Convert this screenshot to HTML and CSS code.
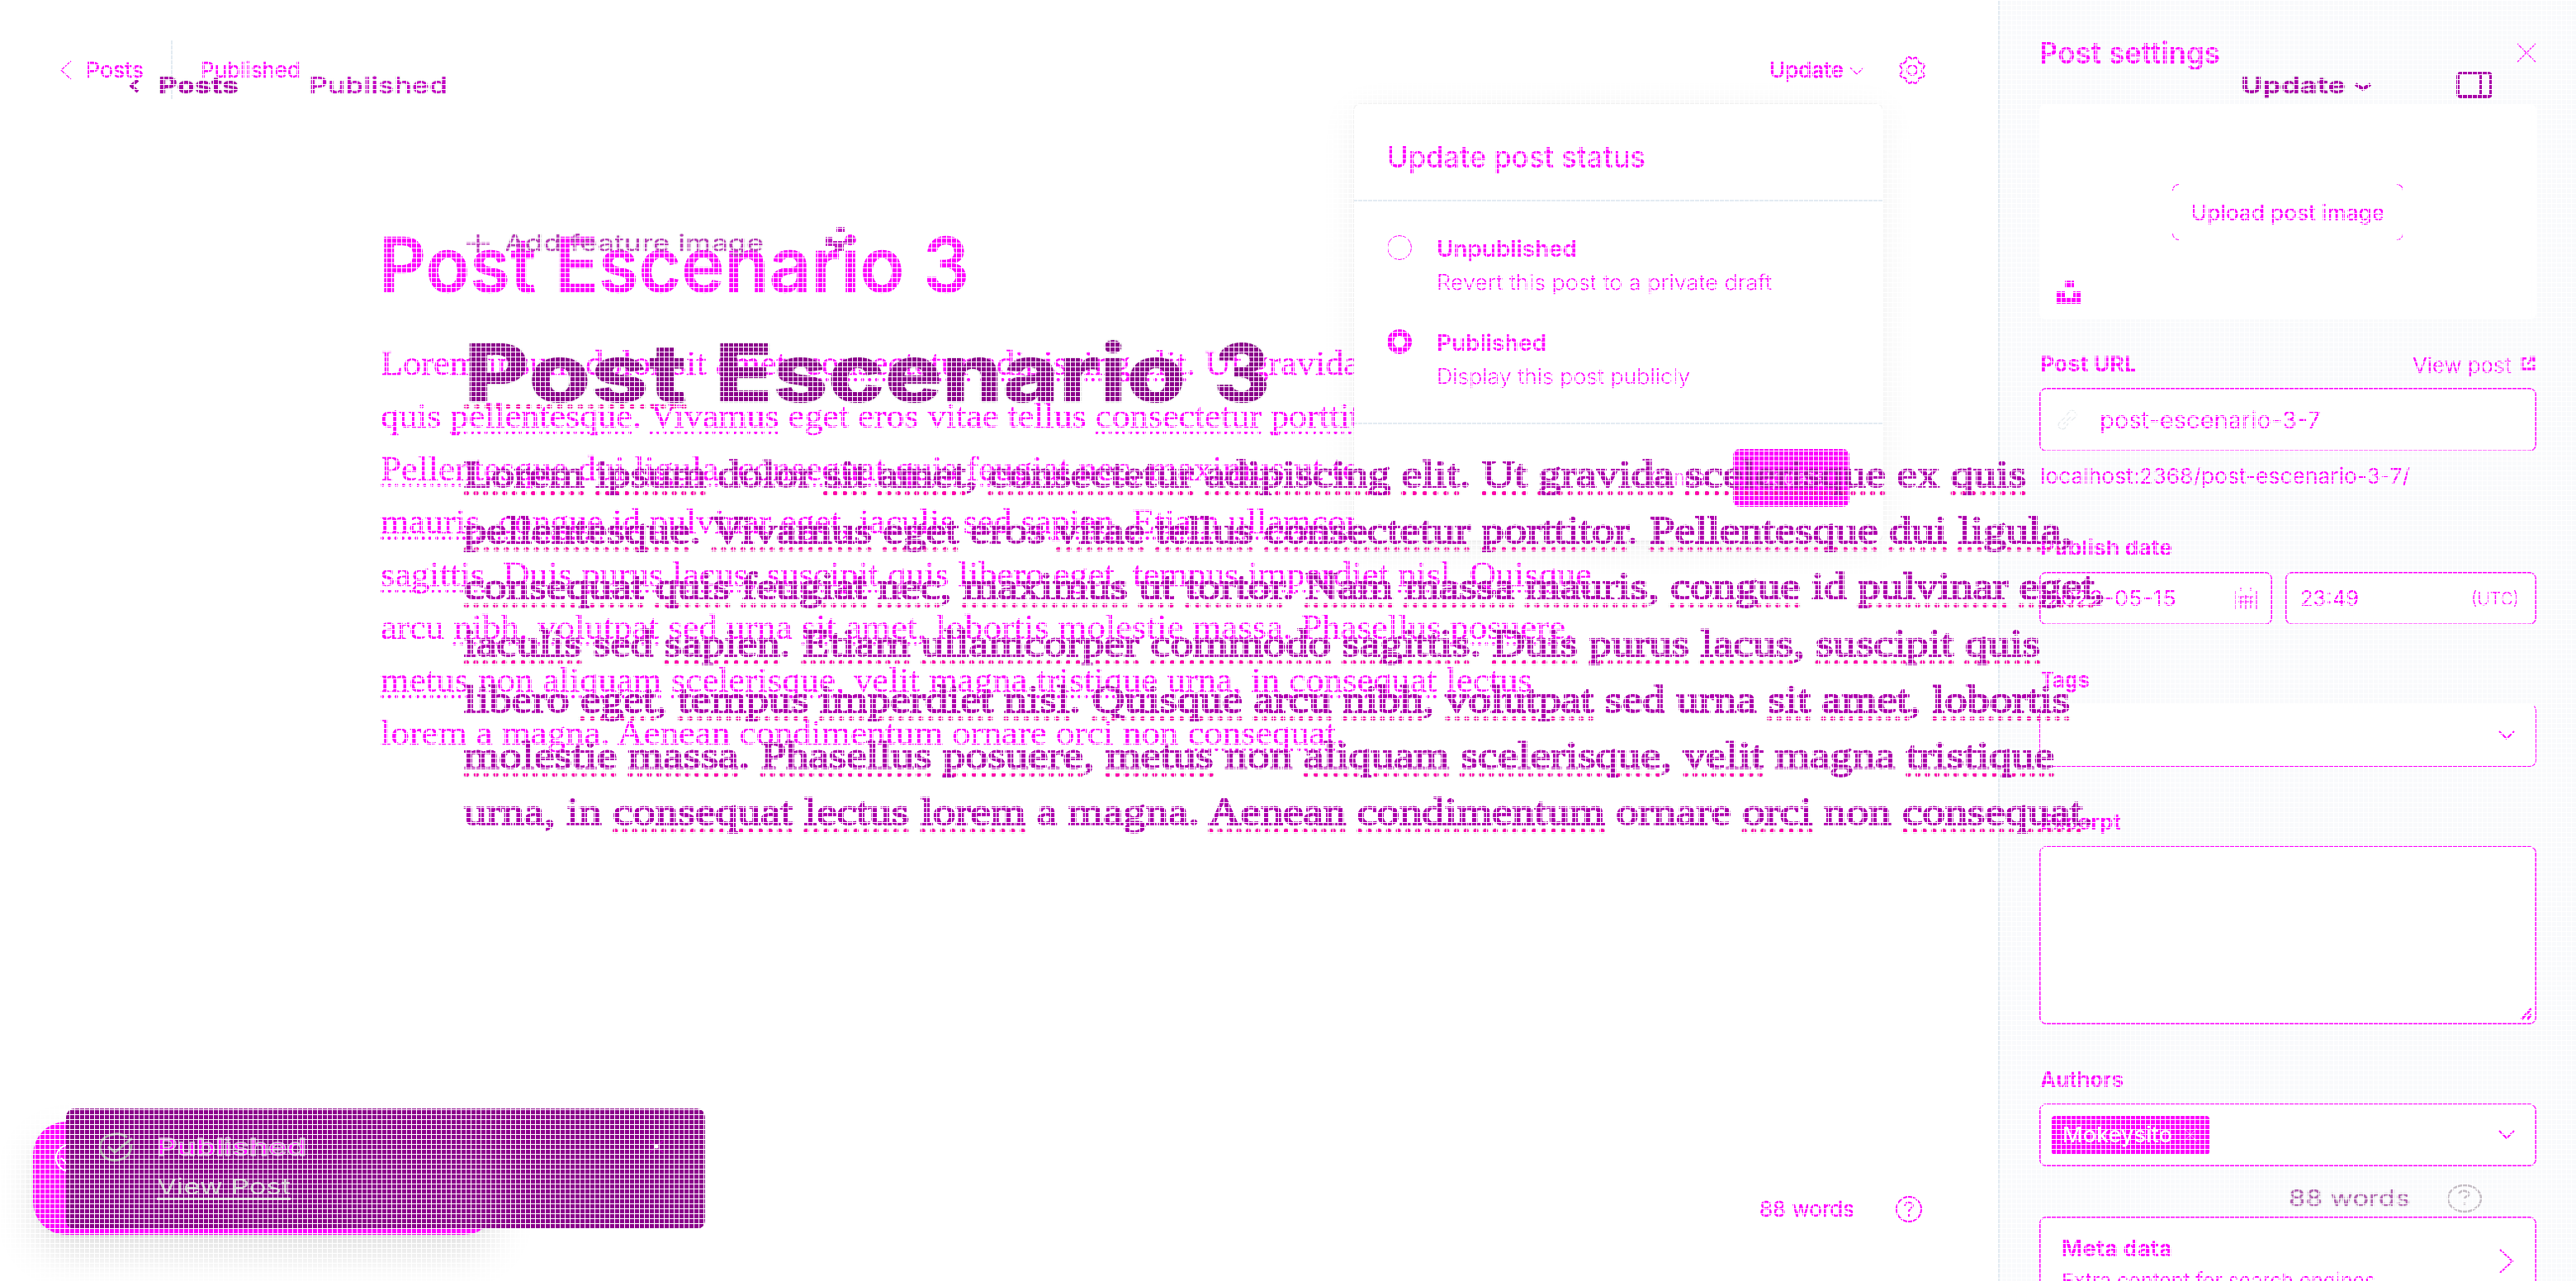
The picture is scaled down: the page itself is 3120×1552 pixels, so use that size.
FILE: index.html
```html
<!DOCTYPE html>
<html lang="en">
<head>
<meta charset="utf-8">
<title>Post Escenario 3</title>
<link rel="stylesheet" href="styles.css">
</head>
<body>
<div class="screen">
  <div class="app">
    <main class="editor">
      <header class="bar">
        <svg class="ico thin back" width="16" height="24" viewBox="0 0 16 24"><path d="M14 1L2 12l12 11"/></svg>
        <span class="fit posts" data-w="70">Posts</span>
        <i class="divider"></i>
        <span class="fit" data-w="121">Published</span>
        <span class="fit update" data-w="90">Update</span>
        <svg class="ico thin caret" width="18" height="12" viewBox="0 0 18 12"><path d="M1 2l8 8 8-8"/></svg>
        <svg class="ico gear" width="34" height="34" viewBox="0 0 34 34"><path d="M17 4Q22-1 24 5q0 4 5 4 5 2 1 6-3 3 0 5 4 5-2 6-4 0-4 4-2 5-7 1-4 4-7-1 0-4-4-4-6-2-2-6 3-3 0-6-4-4 1-5 5-1 5-5 2-6 7 0z"/><circle cx="17" cy="17" r="6"/></svg>
      </header>
      <h1><span class="fit" data-w="715">Post Escenario 3</span></h1>
      <div class="body">
        <p><span class="fit" data-w="1186">Lorem ipsum dolor sit amet, <u>consectetur</u> <u>adipiscing</u> <u>elit</u>. Ut gravida</span></p>
        <p><span class="fit" data-w="1231">quis <u>pellentesque</u>. <u>Vivamus</u> eget eros vitae tellus <u>consectetur</u> <u>porttitor</u>.</span></p>
        <p><span class="fit" data-w="1261"><u>Pellentesque</u> dui <u>ligula</u>, <u>consequat</u> <u>quis</u> <u>feugiat</u> nec, maximus ut tortor.</span></p>
        <p><span class="fit" data-w="1240"><u>mauris</u>, <u>congue</u> id pulvinar eget, iaculis sed <u>sapien</u>. <u>Etiam</u> <u>ullamcorper</u></span></p>
        <p><span class="fit" data-w="1467"><u>sagittis</u>. Duis <u>purus</u> <u>lacus</u>, <u>suscipit</u> quis libero eget, tempus <u>imperdiet</u> <u>nisl</u>. <u>Quisque</u></span></p>
        <p><span class="fit" data-w="1446">arcu <u>nibh</u>, <u>volutpat</u> sed urna <u>sit</u> <u>amet</u>, lobortis molestie massa. Phasellus <u>posuere</u>,</span></p>
        <p><span class="fit" data-w="1395"><u>metus</u> non <u>aliquam</u> <u>scelerisque</u>, velit magna <u>tristique</u> urna, in <u>consequat</u> <u>lectus</u></span></p>
        <p><span class="fit" data-w="1168">lorem a magna. Aenean condimentum ornare orci non <u>consequat</u>.</span></p>
      </div>
      <footer class="words"><span class="fit" data-w="115">88 words</span>
        <svg class="ico" width="34" height="34" viewBox="0 0 34 34"><circle cx="17" cy="17" r="15"/><path d="M12 13q1-5 6-4 6 2 3 6-4 2-4 5M17 23v3"/></svg>
      </footer>
    </main>

    <aside class="sidebar">
      <div class="row side-head"><span class="fit" data-w="219">Post settings</span>
        <svg class="ico thin" width="24" height="24" viewBox="0 0 24 24"><path d="M1 1l22 22M23 1L1 23"/></svg></div>
      <div class="upload">
        <div class="upload-btn"><i></i><i></i><i></i><i></i><span class="fit" data-w="234">Upload post image</span></div>
        <svg class="solid unsplash" width="30" height="28" viewBox="0 0 30 28"><path d="M10 0h11v8H10zM0 13h10v7h10v-7h10v15H0z"/></svg>
      </div>
      <div class="row label url"><span class="fit" data-w="117">Post URL</span><span class="view"><span class="fit" data-w="120">View post</span>
        <svg class="ico bold" width="18" height="18" viewBox="0 0 18 18"><path d="M7 3H2v13h14v-5M8 10l8-8M11 2h5v5"/></svg></span></div>
      <div class="field slug">
        <svg class="link" width="26" height="26" viewBox="0 0 26 26"><path d="M11 8l5-6q4-2 7 2 2 3-1 6l-6 5M14 17l-4 6q-4 2-7-1-2-4 1-7l6-5M8 18l10-10"/></svg>
        <span class="fit" data-w="268">post-escenario-3-7</span></div>
      <div class="hint"><span class="fit" data-w="448">localhost:2368/post-escenario-3-7/</span></div>
      <div class="label gap"><span class="fit" data-w="160">Publish date</span></div>
      <div class="row dates">
        <div class="field date"><span class="fit" data-w="157">2022-05-15</span>
          <svg class="ico thin" width="28" height="28" viewBox="0 0 28 28"><path d="M1 5v22M27 5v22M8 1v4M20 1v4M5 12h18M5 18h18M8 12v14M14 10v17M20 12v14"/></svg></div>
        <div class="field time"><span class="fit" data-w="71">23:49</span><small class="fit" data-w="58">(UTC)</small></div>
      </div>
      <div class="label gap"><span class="fit" data-w="60">Tags</span></div>
      <div class="field select open"><svg class="ico" width="20" height="12" viewBox="0 0 20 12"><path d="M1 1l9 9 9-9"/></svg></div>
      <div class="label gap"><span class="fit" data-w="98">Excerpt</span></div>
      <div class="field area"><svg class="ico bold" width="16" height="16" viewBox="0 0 16 16"><path d="M2 14L14 1M9 14l5-6"/></svg></div>
      <div class="label gap"><span class="fit" data-w="101">Authors</span></div>
      <div class="field select"><div class="token"><span class="fit" data-w="133">Mokeysito</span>
          <svg width="18" height="18" viewBox="0 0 18 18"><path d="M1 1l16 16M17 1L1 17"/></svg></div>
        <svg class="ico" width="20" height="12" viewBox="0 0 20 12"><path d="M1 1l9 9 9-9"/></svg></div>
      <div class="field meta"><div><b class="fit" data-w="134">Meta data</b><br><span class="fit" data-w="380">Extra content for search engines</span></div>
        <svg class="ico" width="18" height="30" viewBox="0 0 18 30"><path d="M1 1l15 14L1 29"/></svg></div>
    </aside>
  </div>

  <section class="menu">
    <div class="menu-head"><span class="fit" data-w="313">Update post status</span></div>
    <div class="options">
      <div class="option"><i class="radio"></i><div><b class="fit" data-w="170">Unpublished</b><span class="fit" data-w="406">Revert this post to a private draft</span></div></div>
      <div class="option"><i class="radio on"></i><div><b class="fit" data-w="133">Published</b><span class="fit" data-w="307">Display this post publicly</span></div></div>
    </div>
    <div class="menu-foot"><span class="fit" data-w="72">Cancel</span><div class="btn"><span class="fit" data-w="84">Update</span></div></div>
  </section>

  <div class="toast small"><svg width="36" height="36" viewBox="0 0 36 36"><circle cx="18" cy="18" r="16"/><path d="M8 18l7 7 12-13"/></svg></div>

  <div class="overlay">
    <header class="o-bar">
      <svg class="ico heavy" width="15" height="18" viewBox="0 0 15 18"><path d="M12 2L4 9l8 7"/></svg>
      <b class="fit" data-w="97">Posts</b>
      <span class="fit status" data-w="168">Published</span>
      <b class="fit o-update" data-w="127">Update</b>
      <svg class="ico heavy caret" width="24" height="12" viewBox="0 0 24 12"><path d="M3 3l9 6 9-6"/></svg>
      <svg class="ico heavy panel" width="44" height="32" viewBox="0 0 44 32"><rect x="2" y="2" width="40" height="28" rx="3"/><path d="M30 2v28"/></svg>
    </header>
    <div class="feature">
      <svg class="ico" width="28" height="22" viewBox="0 0 28 22"><path d="M14 0v22M0 11h28"/></svg>
      <span class="fit" data-w="314">Add feature image</span>
      <svg class="solid" width="40" height="30" viewBox="0 0 40 30"><path d="M16 0h10v6H16zM3 12h8v5h18v-5h8v9H25v8H14v-6H3z"/></svg>
    </div>
    <h2><span class="fit" data-w="270"><u>Post</u></span><span class="fit" data-w="570">Escenario</span><span class="fit" data-w="68">3</span></h2>
    <div class="o-body">
      <p><span class="fit" data-w="1892"><u>Lorem</u> <u>ipsum</u> dolor <u>sit</u> <u>amet</u>, <u>consectetur</u> <u>adipiscing</u> <u>elit</u>. <u>Ut</u> <u>gravida</u> <u>scelerisque</u> ex <u>quis</u></span></p>
      <p><span class="fit" data-w="1948"><u>pellentesque</u>. <u>Vivamus</u> <u>eget</u> eros <u>vitae</u> <u>tellus</u> <u>consectetur</u> <u>porttitor</u>. <u>Pellentesque</u> <u>dui</u> <u>ligula</u>,</span></p>
      <p><span class="fit" data-w="1988"><u>consequat</u> <u>quis</u> <u>feugiat</u> <u>nec</u>, <u>maximus</u> <u>ut</u> <u>tortor</u>. <u>Nam</u> <u>massa</u> <u>mauris</u>, <u>congue</u> id <u>pulvinar</u> <u>eget</u>,</span></p>
      <p><span class="fit" data-w="1909"><u>iaculis</u> sed <u>sapien</u>. <u>Etiam</u> <u>ullamcorper</u> <u>commodo</u> <u>sagittis</u>. <u>Duis</u> <u>purus</u> <u>lacus</u>, <u>suscipit</u> <u>quis</u></span></p>
      <p><span class="fit" data-w="1945">libero <u>eget</u>, <u>tempus</u> <u>imperdiet</u> <u>nisl</u>. <u>Quisque</u> <u>arcu</u> <u>nibh</u>, <u>volutpat</u> sed urna <u>sit</u> <u>amet</u>, <u>lobortis</u></span></p>
      <p><span class="fit" data-w="1926"><u>molestie</u> <u>massa</u>. <u>Phasellus</u> <u>posuere</u>, <u>metus</u> non <u>aliquam</u> <u>scelerisque</u>, <u>velit</u> magna <u>tristique</u></span></p>
      <p><span class="fit" data-w="1974">urna, in <u>consequat</u> <u>lectus</u> <u>lorem</u> a magna. <u>Aenean</u> <u>condimentum</u> ornare <u>orci</u> non <u>consequat</u>.</span></p>
    </div>
    <footer class="o-words"><span class="fit" data-w="147">88 words</span>
      <svg width="44" height="36" viewBox="0 0 44 36"><ellipse cx="22" cy="18" rx="20" ry="16"/><path d="M15 13q2-5 8-4 7 2 3 6-4 1-4 4M22 23v3"/></svg></footer>
  </div>

  <div class="toast big">
    <svg width="44" height="36" viewBox="0 0 44 36"><path d="M35 6Q28 1 20 2 3 4 2 18q2 15 18 16 20-2 20-19M12 17l8 7 21-17"/></svg>
    <div><b class="fit" data-w="181">Published</b><span class="fit link-text" data-w="162">View Post</span></div>
    <svg class="x" width="20" height="18" viewBox="0 0 20 18"><path d="M2 2l16 14M18 2L2 16"/><circle cx="10" cy="9" r="2.500"/></svg>
  </div>
  <div class="mesh"></div>
</div>
<script src="script.js"></script>
</body>
</html>
```
FILE: styles.css
```css
* { box-sizing: border-box; }
body { margin: 0; font-family: Inter, sans-serif; font-size: 26px; line-height: 40px; color: #f0f; background: #fff; }
h1, h2, p { margin: 0; }
svg { flex: none; display: block; fill: none; stroke: #f0f; stroke-width: 2; }
svg.thin { stroke-width: 1.2; }
svg.bold { stroke-width: 3; }
svg.heavy { stroke: #a800a8; stroke-width: 4; }
svg.solid { fill: #f0f; stroke: none; }
.fit { display: inline-block; white-space: nowrap; transform-origin: 0 0; flex: none; }
.screen { position: relative; width: 3120px; height: 1552px; overflow: hidden; }
.app { display: grid; grid-template-columns: 2420px 700px; height: 1552px; }
.row { display: flex; justify-content: space-between; align-items: center; }

.editor { display: flex; flex-direction: column; -webkit-text-stroke: .4px #f0f; }
.bar { display: flex; align-items: center; height: 71px; margin-top: 49px; padding: 0 87px 0 72px; }
.bar .fit { line-height: 42px; }
.posts { margin-left: 16px; }
.divider { width: 2px; height: 71px; margin: 0 34px 0 33px; background: #e3ebf2; }
.update { margin-left: auto; font-weight: 500; }
.bar .caret { margin: 3px 41px 0 7px; }
.editor h1 { margin: 145px 0 31px 459px; font-size: 92px; line-height: 112px; font-weight: 600; }
.body { padding-left: 461px; font: 42px/64px "Liberation Serif", serif; }
.body p, .o-body p { white-space: nowrap; }
u { text-decoration: underline dotted 4px #f0f; text-underline-offset: 4px; text-decoration-skip-ink: none; }
.words { display: flex; justify-content: flex-end; gap: 49px; align-items: center; margin-top: auto; padding: 0 91px 67px 0; }

.sidebar { padding: 40px 48px 0 48px; background: #f9fafc; border-left: 2px solid #e3ebf2; overflow: hidden; }
.side-head { height: 48px; font-size: 36px; font-weight: 600; }
.upload { display: flex; flex-direction: column; align-items: center; height: 261px; margin: 38px 0 34px; padding-top: 97px; background: #fff; border-radius: 8px; }
.upload-btn { position: relative; width: 280px; height: 68px; padding: 15px 23px 13px; font-weight: 500; }
.upload-btn i { position: absolute; width: 8px; height: 8px; border: 0 solid #f0f; }
.upload-btn i:nth-child(1) { left: 0; top: 0; border-width: 1px 0 0 1px; border-top-left-radius: 8px; }
.upload-btn i:nth-child(2) { right: 0; top: 0; border-width: 1px 1px 0 0; border-top-right-radius: 8px; }
.upload-btn i:nth-child(3) { right: 0; bottom: 0; border-width: 0 1px 1px 0; border-bottom-right-radius: 8px; }
.upload-btn i:nth-child(4) { left: 0; bottom: 0; border-width: 0 0 1px 1px; border-bottom-left-radius: 8px; }
.unsplash { align-self: flex-start; margin: 49px 0 0 21px; }
.label { height: 40px; margin-bottom: 9px; padding-left: 1px; font-weight: 650; }
.label.gap { margin-top: 47px; }
.view { display: flex; gap: 11px; padding: 4px 1px 0 0; font-weight: 400; }
.view svg { margin-top: 8px; }
.field { display: flex; align-items: center; background: #fff; border: 1px solid #f0f; border-radius: 8px; box-shadow: inset 0 0 0 .5px #f0f; }
.slug { height: 77px; padding-left: 20px; gap: 26px; font-size: 28px; }
.link { stroke: #e8ecef; stroke-width: 1.5; }
.hint { margin-top: 10px; height: 40px; padding-left: 1px; }
.date, .time { height: 64px; justify-content: space-between; padding: 0 17px; }
.date { width: 282px; padding-left: 8px; }
.time { width: 304px; padding-right: 20px; }
.time small { font-size: 22px; font-weight: 300; }
.select { height: 76px; justify-content: flex-end; padding: 0 25px 0 14px; }
.select.open { border-top-color: #fff; box-shadow: none; }
.area { height: 216px; align-items: flex-end; justify-content: flex-end; padding: 3px; }
.token { display: flex; align-items: center; gap: 13px; width: 191px; height: 47px; margin-right: auto; padding-left: 13px; background: #f0f; color: #fff; border-radius: 4px; font-weight: 500; }
.token svg { stroke: #ff9cff; stroke-width: 1; }
.meta { height: 140px; margin-top: 61px; padding: 18px 26px; justify-content: space-between; align-items: flex-start; }
.meta b { font-size: 27px; font-weight: 650; }
.meta div { line-height: 39px; }
.meta svg { margin-top: 20px; }

.menu { position: absolute; left: 1640px; top: 126px; width: 640px; height: 529px; background: #fff; border-radius: 8px; box-shadow: 0 0 2px rgba(0,0,0,.14), 0 8px 44px rgba(0,0,0,.07); }
.menu-head { height: 118px; padding: 40px 0 0 40px; border-bottom: 2px solid #e3ebf2; font-size: 36px; line-height: 48px; font-weight: 500; }
.options { display: flex; flex-direction: column; gap: 36px; height: 268px; padding: 39px 40px 0; }
.option { display: flex; gap: 30px; line-height: 38px; }
.option div { display: flex; flex-direction: column; gap: 2px; align-items: flex-start; }
.option b { font-size: 27px; font-weight: 600; }
.option span { font-size: 25px; font-weight: 300; }
.radio { width: 30px; height: 30px; margin-top: 2px; border: 1.5px solid #f0f; border-radius: 50%; }
.radio.on { border-width: 8px; }
.menu-foot { display: flex; justify-content: flex-end; align-items: center; gap: 28px; padding: 30px 40px 0 0; border-top: 2px solid #e3ebf2; }
.menu-foot > span { color: #ff50ff; font-weight: 300; }
.btn { width: 141px; height: 70px; padding: 15px 28px; background: #f0f; border-radius: 8px; color: #ff9cff; }

.toast { position: absolute; display: flex; }
.toast.small { left: 40px; top: 1359px; width: 562px; height: 137px; padding: 26px; background: #f0f; border-radius: 40px; box-shadow: 0 22px 50px rgba(0,0,0,.13), 0 2px 10px rgba(0,0,0,.06); }
.toast.small svg { stroke: #fff; }
.toast.big { left: 80px; top: 1343px; width: 774px; height: 146px; padding: 29px 49px 0 39px; background: #8b008b; border-radius: 10px; color: #c8c0c8; }
.toast.big svg { stroke: #a39aa3; stroke-width: 3; }
.toast.big div { display: flex; flex-direction: column; align-items: flex-start; gap: 8px; margin: -2px auto 0 27px; }
.toast.big b { color: #f0f; font-size: 28px; font-weight: 600; -webkit-text-stroke: 1.3px #c9b4c9; }
.link-text { text-decoration: underline 3px; text-underline-offset: 4px; text-decoration-skip-ink: none; }
.toast.big .x { margin-top: 8px; stroke: #b400b4; stroke-width: 2; }
.toast.big .x circle { fill: #fff; stroke: none; }

.overlay { position: absolute; inset: 0; display: flex; flex-direction: column; color: #a800a8; text-shadow: 0 0 2px #aaa; }
.o-bar { display: flex; align-items: center; height: 40px; margin-top: 84px; padding: 0 101px 0 155px; font-size: 27px; }
.o-bar b { font-weight: 800; }
.o-bar > b:first-of-type { margin-left: 22px; }
.status { margin-left: 85px; color: #c400c4; font-weight: 500; }
.o-bar .o-update { margin-left: auto; font-weight: 700; }
.o-bar .caret { margin: 2px 101px 0 9px; }
.o-bar .panel { margin-top: -2px; }
.feature { display: flex; align-items: center; height: 40px; margin: 151px 0 77px 565px; font-size: 27px; color: #b838b8; }
.feature .fit { margin-left: 18px; }
.feature svg { stroke: #b838b8; stroke-width: 3; }
.feature .solid { margin: -10px 0 0 72px; fill: #c020c0; stroke: none; }
.overlay h2 { display: flex; margin-left: 562px; font-size: 98px; line-height: 120px; font-weight: 800; color: #8b008b; }
.overlay h2 .fit { position: static; }
.overlay h2 .fit + .fit { padding-left: 0; }
.overlay h2 { column-gap: 34px; }
.overlay u { text-decoration: underline dotted 5px #ff00a8; text-underline-offset: 5px; }
.overlay h2 u { text-decoration-thickness: 5px; text-underline-offset: 3px; }
.o-body { margin: 29px 0 0 562px; font: 46px/68.2px "Liberation Serif", serif; -webkit-text-stroke: 1.7px #b000b0; }
.o-words { display: flex; justify-content: flex-end; align-items: center; gap: 44px; margin-top: auto; padding: 0 113px 80px 0; color: #b060b0; font-size: 27px; }
.o-words svg { stroke: #c4bcc4; stroke-width: 2.5; }

.mesh { position: absolute; inset: 0; background: repeating-linear-gradient(90deg, #fff 0 1px, transparent 1px 6px), repeating-linear-gradient(#fff 0 1px, transparent 1px 6px); }
```
FILE: script.js
```js
// Stretches each label horizontally to the width given in data-w.
document.querySelectorAll('.fit').forEach(function (el) {
  var natural = el.getBoundingClientRect().width;
  var wanted = parseFloat(el.dataset.w);
  el.style.transform = 'scaleX(' + wanted / natural + ')';
  el.style.marginRight = (wanted - natural) + 'px';
});
```
